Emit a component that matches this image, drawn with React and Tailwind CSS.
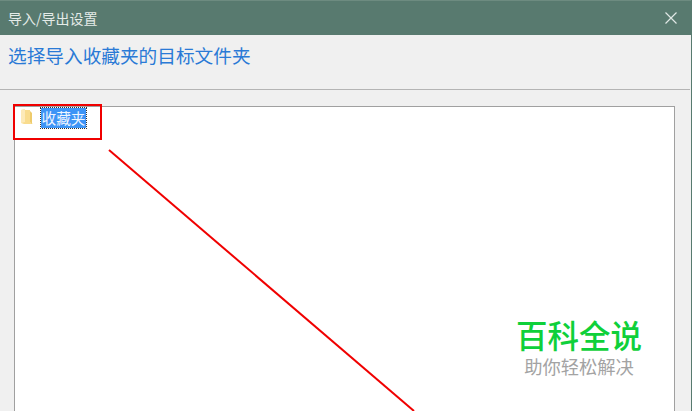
const CJK = "font-['Microsoft_YaHei','Noto_Sans_CJK_SC',sans-serif]";

function Folder() {
  return (
    <svg width="12" height="16" viewBox="0 0 12 16" className="shrink-0">
      <path d="M0 1 L4 0 L4 1 L9 1 L9 13 L12 15 L3 15 L0 14 Z" fill="#f9dc8e" />
      <path d="M0 1 L4 0 L4 13 L0 14 Z" fill="#fdeab8" />
      <path d="M9 2 L9 13 L11 15 L11 4 Z" fill="#eecb6c" />
    </svg>
  );
}

function App() {
  return (
    <div className={`relative w-[692px] h-[411px] overflow-hidden bg-[#f0f0f0] border-r border-[#587a6f] ${CJK}`}>
      <div className="flex h-[35px] items-center justify-between bg-[#587a6f] border-t border-[#6d8b80] pl-2 pr-[14px]">
        <span className="text-[14px] text-[#e4ebe8]">导入/导出设置</span>
        <svg width="12" height="12" viewBox="0 0 12 12">
          <path d="M0.5 0.5 L11.5 11.5 M11.5 0.5 L0.5 11.5" stroke="#e0e8e5" strokeWidth="1.2" />
        </svg>
      </div>

      <div className="h-[55px] pl-2 pt-[7px] border-b border-[#b4b4b4] mr-[1px]">
        <h1 className="text-[18.67px] leading-[26px] font-normal text-[#2a7ad6]">选择导入收藏夹的目标文件夹</h1>
      </div>

      <div className="ml-[14px] mr-[16px] mt-[16px] h-[320px] bg-white border border-[#a0a0a0] border-b-0">
        <div className="flex items-start gap-[8px] pl-[6px] pt-[2px]">
          <Folder />
          <span className="bg-[#3d94f6] text-[#eef5ff] text-[14.67px] leading-[20px] w-[45px] text-center outline-1 outline-dotted outline-[#333] -mt-[1px]">收藏夹</span>
        </div>
      </div>

      <div className="absolute left-[516px] top-[316px] w-[126px] flex flex-col items-center">
        <div className="text-[31.5px] leading-[36px] font-medium text-[#0fd03a] whitespace-nowrap">百科全说</div>
        <div className="text-[18.3px] leading-[22px] mt-[3px] text-[#a3a3a3] whitespace-nowrap">助你轻松解决</div>
      </div>

      <div className="absolute left-[13px] top-[104px] w-[89px] h-[36px] border-2 border-[#f00000]" />
      <svg className="absolute left-0 top-0" width="692" height="411">
        <line x1="109" y1="150" x2="414" y2="411" stroke="#f00000" strokeWidth="2" />
      </svg>
    </div>
  );
}

export default App;
